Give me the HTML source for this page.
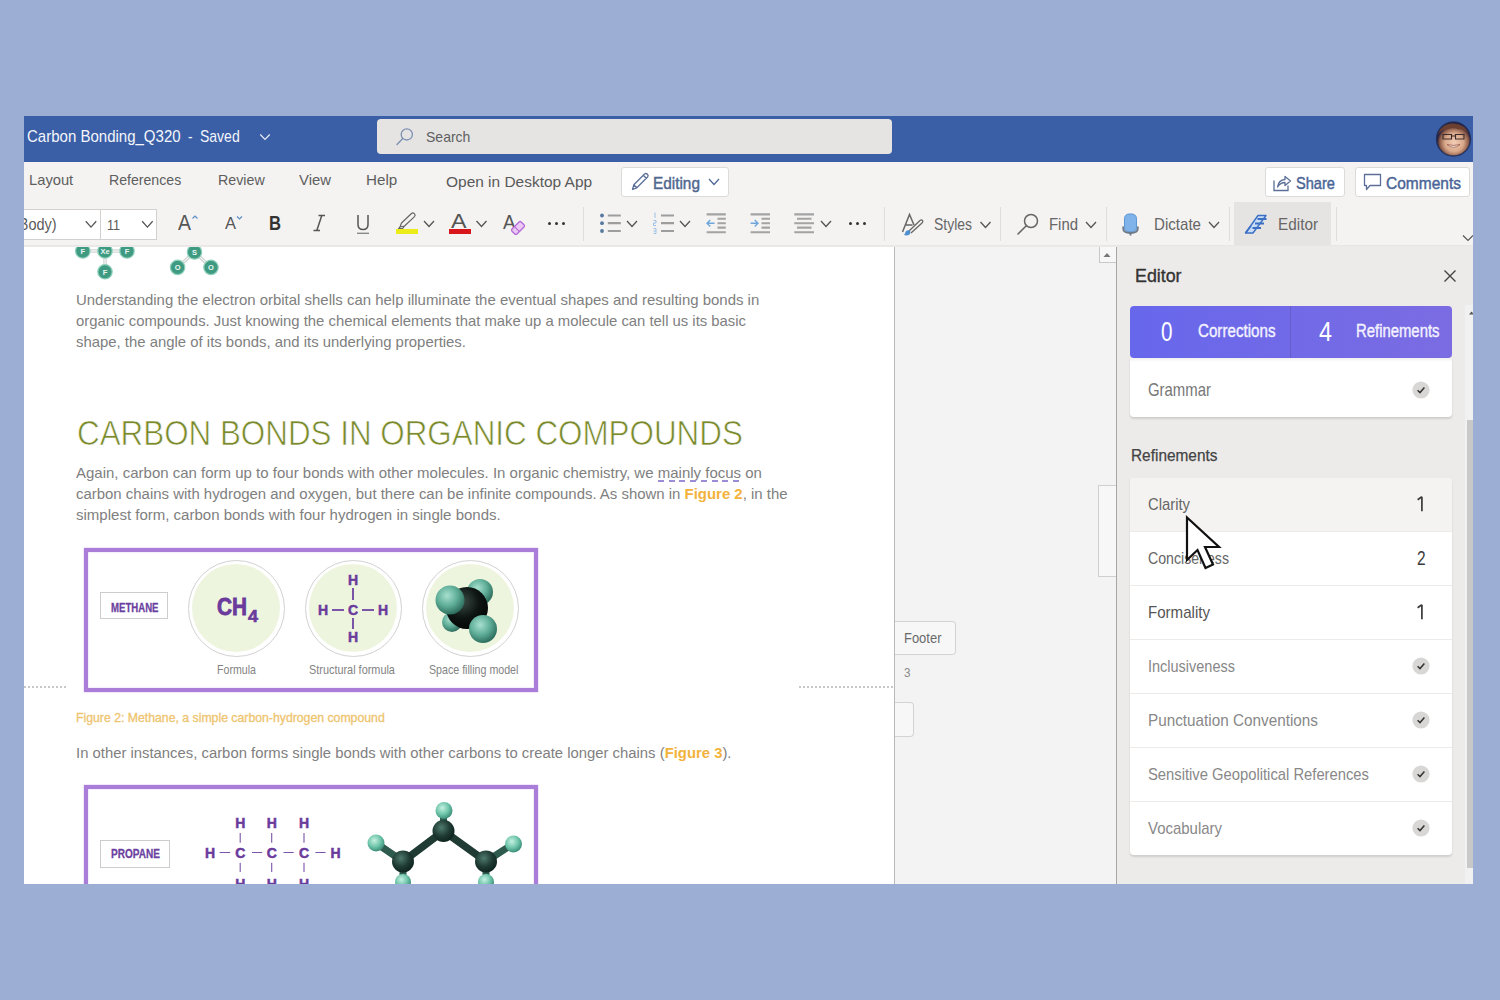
<!DOCTYPE html>
<html><head><meta charset="utf-8">
<style>
*{margin:0;padding:0;box-sizing:border-box}
html,body{width:1500px;height:1000px;overflow:hidden;background:#9caed3;font-family:"Liberation Sans",sans-serif;position:relative}
.a{position:absolute}
.t{position:absolute;white-space:pre;line-height:1;transform-origin:0 0}
svg{overflow:visible}
</style></head><body>
<div class="a" style="left:0;top:0;width:1500px;height:1000px;clip-path:inset(116px 27px 116px 24px)"><div class="a" style="left:0;top:0;width:1500px;height:1000px">
<div class="a" style="left:24px;top:116px;width:1449px;height:768px;background:#f4f3f2"></div>
<div class="a" style="left:24px;top:116px;width:1449px;height:46px;background:#3a5fa6"></div>
<div class="t" style="left:26.60px;top:127.98px;font-size:17.15px;color:#f4f6fb;font-weight:normal;transform:scaleX(0.8760);">Carbon Bonding_Q320</div>
<div class="t" style="left:187.50px;top:127.98px;font-size:17.15px;color:#f4f6fb;font-weight:normal;transform:scaleX(0.7879);">-</div>
<div class="t" style="left:199.50px;top:127.98px;font-size:17.15px;color:#f4f6fb;font-weight:normal;transform:scaleX(0.8165);">Saved</div>
<svg class="a" style="left:259px;top:132px;" width="12.5" height="9" viewBox="0 0 12.5 9"><path d="M1.25 2.50 l4.75 5.00 l4.75 -5.00" fill="none" stroke="#e8ecf5" stroke-width="1.2"/></svg>
<div class="a" style="left:377px;top:119px;width:515px;height:35px;background:#e5e4e3;border-radius:4px"></div>
<svg class="a" style="left:390px;top:125px;" width="24" height="24" viewBox="0 0 24 24"><circle cx="16.8" cy="9.4" r="5.6" fill="none" stroke="#7d91b3" stroke-width="1.3"/><path d="M12.8 13.4 L7 19.6" stroke="#7d91b3" stroke-width="1.4" stroke-linecap="round"/></svg>
<div class="t" style="left:426.40px;top:129.20px;font-size:15.12px;color:#606060;font-weight:normal;transform:scaleX(0.9272);">Search</div>
<svg class="a" style="left:1434px;top:120px" width="38" height="38" viewBox="0 0 38 38">
<defs><radialGradient id="face" cx="52%" cy="60%" r="50%"><stop offset="0" stop-color="#f2cdb5"/><stop offset="0.55" stop-color="#d9a88a"/><stop offset="0.85" stop-color="#8a5a48"/><stop offset="1" stop-color="#2a2240"/></radialGradient></defs>
<circle cx="19.5" cy="19" r="17" fill="url(#face)"/>
<path d="M4 15 Q6 4 19 3.5 Q32 4 35 15 Q31 8.5 25 9.5 Q19 7 13 9.5 Q7 9 4 15Z" fill="#6b4030"/>
<path d="M9 14.5 h8.5 v4.5 h-8.5z M21.5 14.5 h8.5 v4.5 h-8.5z M17.5 16 h4" fill="none" stroke="#3a2a2a" stroke-width="1.1"/>
<path d="M13 24.5 Q19.5 30 26 24.5 Q19.5 26.5 13 24.5Z" fill="#fff" stroke="#9a5a4a" stroke-width="0.8"/>
<circle cx="19.5" cy="19" r="17" fill="none" stroke="#1f2a55" stroke-width="1.4" opacity="0.8"/>
</svg>
<div class="t" style="left:28.70px;top:172.92px;font-size:14.97px;color:#5e5e5e;font-weight:normal;transform:scaleX(0.9835);">Layout</div>
<div class="t" style="left:109.00px;top:172.92px;font-size:14.97px;color:#5e5e5e;font-weight:normal;transform:scaleX(0.9430);">References</div>
<div class="t" style="left:217.60px;top:172.92px;font-size:14.97px;color:#5e5e5e;font-weight:normal;transform:scaleX(0.9525);">Review</div>
<div class="t" style="left:299.20px;top:172.92px;font-size:14.97px;color:#5e5e5e;font-weight:normal;transform:scaleX(0.9933);">View</div>
<div class="t" style="left:365.70px;top:172.92px;font-size:14.97px;color:#5e5e5e;font-weight:normal;transform:scaleX(1.0131);">Help</div>
<div class="t" style="left:446.30px;top:175.45px;font-size:14.83px;color:#595959;font-weight:normal;transform:scaleX(1.0427);">Open in Desktop App</div>
<div class="a" style="left:621px;top:167px;width:108px;height:30px;background:#fff;border:1px solid #dcdbda;border-radius:3px"></div>
<svg class="a" style="left:629px;top:171px;" width="22" height="22" viewBox="0 0 22 22"><path d="M3.5 18.5 L4.8 13.8 L15.6 3 Q17 1.8 18.4 3.2 Q19.8 4.6 18.6 6 L7.8 16.8 Z M14.3 4.3 L17.3 7.3 M4.8 13.8 L7.8 16.8" fill="none" stroke="#5b6f98" stroke-width="1.3" stroke-linejoin="round"/></svg>
<div class="t" style="left:653.00px;top:175.22px;font-size:16.28px;color:#50678f;font-weight:normal;transform:scaleX(0.9441);-webkit-text-stroke:0.45px #50678f">Editing</div>
<svg class="a" style="left:708px;top:177px;" width="13" height="9.5" viewBox="0 0 13 9.5"><path d="M1.00 2.00 l5.00 5.50 l5.00 -5.50" fill="none" stroke="#4a6596" stroke-width="1.2"/></svg>
<div class="a" style="left:1265px;top:167px;width:80px;height:30px;background:#fff;border:1px solid #dcdbda;border-radius:3px"></div>
<svg class="a" style="left:1270px;top:171px;" width="24" height="24" viewBox="0 0 24 24"><path d="M4 9.5 V19.5 H18 V14.5" fill="none" stroke="#5b6f98" stroke-width="1.3"/><path d="M7.5 16 Q8.5 9 15 8.5 V5.5 L20.5 10 L15 14.5 V11.5 Q10.5 11.5 7.5 16Z" fill="none" stroke="#5b6f98" stroke-width="1.3" stroke-linejoin="round"/></svg>
<div class="t" style="left:1296.00px;top:174.60px;font-size:17.01px;color:#4a6596;font-weight:normal;transform:scaleX(0.8596);-webkit-text-stroke:0.45px #4a6596">Share</div>
<div class="a" style="left:1355px;top:167px;width:115px;height:30px;background:#fff;border:1px solid #dcdbda;border-radius:3px"></div>
<svg class="a" style="left:1361px;top:171px;" width="24" height="24" viewBox="0 0 24 24"><path d="M3.5 3.5 H19.5 V14.5 H9 L5.5 18.5 V14.5 H3.5 Z" fill="none" stroke="#5b6f98" stroke-width="1.3" stroke-linejoin="round"/></svg>
<div class="t" style="left:1386.00px;top:174.60px;font-size:17.01px;color:#4a6596;font-weight:normal;transform:scaleX(0.9122);-webkit-text-stroke:0.45px #4a6596">Comments</div>
<div class="a" style="left:20px;top:208.5px;width:80.5px;height:31.0px;background:#fff;border:1px solid #d2d1d0;border-left:none"></div>
<div class="a" style="left:100px;top:208.5px;width:57px;height:31.0px;background:#fff;border:1px solid #d2d1d0"></div>
<div class="t" style="left:14.00px;top:216.79px;font-size:15.84px;color:#5a5a5a;font-weight:normal;transform:scaleX(0.9152);">(Body)</div>
<svg class="a" style="left:84px;top:219px;" width="13.5" height="9.8" viewBox="0 0 13.5 9.8"><path d="M1.75 2.30 l5.25 5.80 l5.25 -5.80" fill="none" stroke="#555" stroke-width="1.3"/></svg>
<div class="t" style="left:106.50px;top:217.03px;font-size:15.55px;color:#5a5a5a;font-weight:normal;transform:scaleX(0.8115);">11</div>
<svg class="a" style="left:141px;top:219px;" width="13.5" height="9.8" viewBox="0 0 13.5 9.8"><path d="M1.15 2.30 l5.25 5.80 l5.25 -5.80" fill="none" stroke="#555" stroke-width="1.3"/></svg>
<div class="t" style="left:178.00px;top:211.54px;font-size:21.80px;color:#555;font-weight:normal;transform:scaleX(0.8940);">A</div>
<svg class="a" style="left:190px;top:213px;" width="10" height="8" viewBox="0 0 10 8"><path d="M2.5 5.5 L5 3 L7.5 5.5" fill="none" stroke="#5b8fc8" stroke-width="1.2"/></svg>
<div class="t" style="left:225.00px;top:215.85px;font-size:16.72px;color:#555;font-weight:normal;transform:scaleX(0.9866);">A</div>
<svg class="a" style="left:235px;top:213px;" width="10" height="8" viewBox="0 0 10 8"><path d="M2 3.5 L4.5 6 L7 3.5" fill="none" stroke="#5b8fc8" stroke-width="1.2"/></svg>
<div class="t" style="left:269.00px;top:212.16px;font-size:21.08px;color:#333;font-weight:bold;transform:scaleX(0.7886);">B</div>
<svg class="a" style="left:310px;top:212px;" width="18" height="22" viewBox="0 0 18 22"><path d="M8.5 3.5 H15 M3.5 18.5 H10 M11.8 3.5 L6.8 18.5" fill="none" stroke="#555" stroke-width="1.5"/></svg>
<svg class="a" style="left:352px;top:212px;" width="22" height="24" viewBox="0 0 22 24"><path d="M6 3 V12.5 Q6 17.5 11 17.5 Q16 17.5 16 12.5 V3" fill="none" stroke="#555" stroke-width="1.5"/><path d="M5 21.3 H17" stroke="#888" stroke-width="1.4"/></svg>
<svg class="a" style="left:394px;top:211px;" width="26" height="26" viewBox="0 0 26 26"><path d="M6 16 L7.5 12 L17.5 2.5 Q19 1.3 20.5 2.8 Q21.8 4.3 20.5 5.6 L10.5 15 Z M6 16 L4.5 17.6 L8.5 17.6 L10.5 15" fill="none" stroke="#666" stroke-width="1.2" stroke-linejoin="round"/><rect x="2" y="18" width="22" height="5" fill="#ecec1a"/></svg>
<svg class="a" style="left:423px;top:219px;" width="13" height="9.5" viewBox="0 0 13 9.5"><path d="M1.00 2.00 l5.00 5.50 l5.00 -5.50" fill="none" stroke="#555" stroke-width="1.3"/></svg>
<div class="t" style="left:450.50px;top:211.89px;font-size:19.62px;color:#555;font-weight:normal;transform:scaleX(1.1843);">A</div>
<div class="a" style="left:449px;top:229px;width:22px;height:5px;background:#d8151b"></div>
<svg class="a" style="left:475px;top:219px;" width="13" height="9.5" viewBox="0 0 13 9.5"><path d="M1.50 2.00 l5.00 5.50 l5.00 -5.50" fill="none" stroke="#555" stroke-width="1.3"/></svg>
<div class="t" style="left:503.00px;top:211.77px;font-size:20.35px;color:#555;font-weight:normal;transform:scaleX(0.9210);">A</div>
<svg class="a" style="left:508px;top:216px;" width="20" height="20" viewBox="0 0 20 20"><g transform="rotate(-45 10 12)"><rect x="3.5" y="8.5" width="13" height="7" rx="1.5" fill="#ecc8f5" stroke="#b46ad6" stroke-width="1.3"/><path d="M8.5 8.5 V15.5" stroke="#b46ad6" stroke-width="1.1"/></g></svg>
<div class="a" style="left:548px;top:221.5px;width:3px;height:3.0px;background:#333;border-radius:50%"></div>
<div class="a" style="left:555px;top:221.5px;width:3px;height:3.0px;background:#333;border-radius:50%"></div>
<div class="a" style="left:562px;top:221.5px;width:3px;height:3.0px;background:#333;border-radius:50%"></div>
<div class="a" style="left:583px;top:207px;width:1px;height:34px;background:#dedddc"></div>
<svg class="a" style="left:596px;top:210px;" width="28" height="28" viewBox="0 0 28 28"><circle cx="6" cy="5.5" r="1.9" fill="#56789e"/><circle cx="6" cy="13.2" r="1.9" fill="#56789e"/><circle cx="6" cy="21" r="1.9" fill="#56789e"/><path d="M11.8 5.5 H24.8 M11.8 13.2 H24.8 M11.8 21 H24.8" stroke="#9d9d9d" stroke-width="2.2"/></svg>
<svg class="a" style="left:626px;top:219px;" width="13" height="9.5" viewBox="0 0 13 9.5"><path d="M1.00 2.00 l5.00 5.50 l5.00 -5.50" fill="none" stroke="#555" stroke-width="1.3"/></svg>
<svg class="a" style="left:650px;top:210px;" width="28" height="28" viewBox="0 0 28 28"><path d="M5 2.5 V8 M3.5 10.5 H6 V13 H3.5 V15.5 H6 M3.5 18.5 H6 V23.5 H3.5 M3.5 21 H6" fill="none" stroke="#9cc0e6" stroke-width="1"/><path d="M11 5.5 H24 M11 13.2 H24 M11 21 H24" stroke="#9d9d9d" stroke-width="2.2"/></svg>
<svg class="a" style="left:679px;top:219px;" width="13" height="9.5" viewBox="0 0 13 9.5"><path d="M1.00 2.00 l5.00 5.50 l5.00 -5.50" fill="none" stroke="#555" stroke-width="1.3"/></svg>
<svg class="a" style="left:700px;top:205px;" width="30" height="32" viewBox="0 0 30 32"><path d="M6.6 9.4 H25.8 M17.5 13.8 H25.8 M17.5 18.3 H25.8 M17.5 22.6 H25.8 M6.6 27.3 H25.8" stroke="#a3a3a3" stroke-width="2.1"/><path d="M14.5 18.3 H7 M10.3 15 L7 18.3 L10.3 21.6" fill="none" stroke="#6fa6da" stroke-width="1.4"/></svg>
<svg class="a" style="left:744px;top:205px;" width="30" height="32" viewBox="0 0 30 32"><path d="M6.6 9.4 H26 M17.5 13.8 H26 M17.5 18.3 H26 M17.5 22.6 H26 M6.6 27.3 H26" stroke="#a3a3a3" stroke-width="2.1"/><path d="M6.6 18.3 H14 M10.7 15 L14 18.3 L10.7 21.6" fill="none" stroke="#6fa6da" stroke-width="1.4"/></svg>
<svg class="a" style="left:788px;top:205px;" width="30" height="32" viewBox="0 0 30 32"><path d="M6.3 9.4 H26 M9 13.8 H23.5 M6.3 18.3 H26 M9 22.6 H23.5 M6.3 27.3 H26" stroke="#a3a3a3" stroke-width="2.1"/></svg>
<svg class="a" style="left:820px;top:219px;" width="13" height="9.5" viewBox="0 0 13 9.5"><path d="M1.00 2.00 l5.00 5.50 l5.00 -5.50" fill="none" stroke="#555" stroke-width="1.3"/></svg>
<div class="a" style="left:849px;top:221.5px;width:3px;height:3.0px;background:#333;border-radius:50%"></div>
<div class="a" style="left:856px;top:221.5px;width:3px;height:3.0px;background:#333;border-radius:50%"></div>
<div class="a" style="left:863px;top:221.5px;width:3px;height:3.0px;background:#333;border-radius:50%"></div>
<div class="a" style="left:884px;top:207px;width:1px;height:34px;background:#dedddc"></div>
<svg class="a" style="left:899px;top:211px;" width="28" height="28" viewBox="0 0 28 28"><path d="M3.5 21 L10.5 3.5 L15 14 M6.5 14 H13.5" fill="none" stroke="#666" stroke-width="1.5"/><path d="M10 20 L21 9.5 Q22.5 8.3 23.5 9.5 Q24.5 10.8 23 12 L12 22" fill="none" stroke="#666" stroke-width="1.3"/><path d="M6 22.5 Q7 18.5 10.5 19.5 Q12.5 21 10.5 23.5 Q8 25 5 24 Z" fill="#4f8fd0"/></svg>
<div class="t" style="left:934.00px;top:216.10px;font-size:17.01px;color:#666;font-weight:normal;transform:scaleX(0.8206);">Styles</div>
<svg class="a" style="left:979px;top:220px;" width="13" height="9.5" viewBox="0 0 13 9.5"><path d="M1.50 2.00 l5.00 5.50 l5.00 -5.50" fill="none" stroke="#555" stroke-width="1.3"/></svg>
<div class="a" style="left:1000px;top:207px;width:1px;height:34px;background:#dedddc"></div>
<svg class="a" style="left:1014px;top:211px;" width="28" height="28" viewBox="0 0 28 28"><circle cx="17" cy="10" r="6.5" fill="none" stroke="#666" stroke-width="1.5"/><path d="M12.3 14.7 L4 23" stroke="#666" stroke-width="1.6" stroke-linecap="round"/></svg>
<div class="t" style="left:1049.00px;top:216.10px;font-size:17.01px;color:#666;font-weight:normal;transform:scaleX(0.8768);">Find</div>
<svg class="a" style="left:1085px;top:220px;" width="13" height="9.5" viewBox="0 0 13 9.5"><path d="M1.00 2.00 l5.00 5.50 l5.00 -5.50" fill="none" stroke="#555" stroke-width="1.3"/></svg>
<div class="a" style="left:1106px;top:207px;width:1px;height:34px;background:#dedddc"></div>
<svg class="a" style="left:1120px;top:211px;" width="22" height="26" viewBox="0 0 22 26"><rect x="4.5" y="3" width="12" height="18" rx="4.5" fill="#80b3ea" stroke="#5b95d6" stroke-width="1"/><path d="M3.2 15.5 V17.5 Q3.2 22 10.5 22 Q17.8 22 17.8 17.5 V15.5" fill="none" stroke="#6d7888" stroke-width="1.8"/><path d="M10.5 22 V24.5" stroke="#6d7888" stroke-width="1.8"/></svg>
<div class="t" style="left:1154.00px;top:216.10px;font-size:17.01px;color:#666;font-weight:normal;transform:scaleX(0.8881);">Dictate</div>
<svg class="a" style="left:1208px;top:220px;" width="13" height="9.5" viewBox="0 0 13 9.5"><path d="M1.00 2.00 l5.00 5.50 l5.00 -5.50" fill="none" stroke="#555" stroke-width="1.3"/></svg>
<div class="a" style="left:1229px;top:207px;width:1px;height:34px;background:#dedddc"></div>
<div class="a" style="left:1234px;top:202px;width:97px;height:43px;background:#e5e4e3"></div>
<svg class="a" style="left:1242px;top:211px;" width="28" height="26" viewBox="0 0 28 26"><path d="M3.5 22 L16 4.5 L24 4.5 L11 22 Z" fill="#c9dcf5" stroke="#3a6fc4" stroke-width="1.4" stroke-linejoin="round"/><path d="M15.5 8 H24.5 M13 12.5 H22 M10.5 17 H19" stroke="#3a6fc4" stroke-width="2.2"/><path d="M3.5 22 L9 15" stroke="#3a6fc4" stroke-width="1.6"/></svg>
<div class="t" style="left:1278.00px;top:216.10px;font-size:17.01px;color:#666;font-weight:normal;transform:scaleX(0.9005);">Editor</div>
<div class="a" style="left:1336px;top:207px;width:1px;height:34px;background:#dedddc"></div>
<svg class="a" style="left:1462px;top:233px;" width="13" height="9" viewBox="0 0 13 9"><path d="M1.00 2.50 l5.00 5.00 l5.00 -5.00" fill="none" stroke="#555" stroke-width="1.2"/></svg>
<div class="a" style="left:24px;top:245px;width:1449px;height:3px;background:linear-gradient(#e6e5e4,#f0efee)"></div>
<div class="a" style="left:24px;top:247px;width:870px;height:637px;background:#fff"></div>
<div class="a" style="left:894px;top:247px;width:222px;height:637px;background:#f3f3f3"></div>
<div class="a" style="left:24px;top:247px;width:870px;height:60px;overflow:hidden">
<svg class="a" style="left:-24px;top:-247px" width="300" height="300" viewBox="0 0 300 300"><path d="M82.8 251 H127 M105 251 V272 M177.6 267.4 L194.5 252 L211 267.4" stroke="#cfd6d3" stroke-width="3.4" fill="none"/><path d="M82.8 251 H127 M105 251 V272 M177.6 267.4 L194.5 252 L211 267.4" stroke="#fff" stroke-width="1" fill="none"/><g fill="#3f9a82" stroke="#8fd0bb" stroke-width="1.2"><circle cx="82.8" cy="251" r="7.2"/><circle cx="105" cy="251" r="7.2"/><circle cx="127" cy="251" r="7.2"/><circle cx="105" cy="271.8" r="7.2"/><circle cx="194.5" cy="252" r="7.2"/><circle cx="177.6" cy="267.4" r="7.2"/><circle cx="211" cy="267.4" r="7.2"/></g><text x="82.8" y="253.8" font-size="7.5" font-weight="bold" fill="#e9f7f1" text-anchor="middle" font-family="Liberation Sans">F</text><text x="105" y="253.8" font-size="7.5" font-weight="bold" fill="#e9f7f1" text-anchor="middle" font-family="Liberation Sans">Xe</text><text x="127" y="253.8" font-size="7.5" font-weight="bold" fill="#e9f7f1" text-anchor="middle" font-family="Liberation Sans">F</text><text x="105" y="274.6" font-size="7.5" font-weight="bold" fill="#e9f7f1" text-anchor="middle" font-family="Liberation Sans">F</text><text x="194.5" y="254.8" font-size="7.5" font-weight="bold" fill="#e9f7f1" text-anchor="middle" font-family="Liberation Sans">S</text><text x="177.6" y="270.2" font-size="7.5" font-weight="bold" fill="#e9f7f1" text-anchor="middle" font-family="Liberation Sans">O</text><text x="211" y="270.2" font-size="7.5" font-weight="bold" fill="#e9f7f1" text-anchor="middle" font-family="Liberation Sans">O</text></svg>
</div>
<div class="t" style="left:76.00px;top:291.95px;font-size:15.41px;color:#808080;font-weight:normal;transform:scaleX(0.9705);">Understanding the electron orbital shells can help illuminate the eventual shapes and resulting bonds in</div>
<div class="t" style="left:76.00px;top:312.95px;font-size:15.41px;color:#808080;font-weight:normal;transform:scaleX(0.9635);">organic compounds. Just knowing the chemical elements that make up a molecule can tell us its basic</div>
<div class="t" style="left:76.00px;top:333.95px;font-size:15.41px;color:#808080;font-weight:normal;transform:scaleX(0.9667);">shape, the angle of its bonds, and its underlying properties.</div>
<div class="t" style="left:77.30px;top:415.76px;font-size:34.88px;color:#7a8a2c;font-weight:normal;transform:scaleX(0.8995);-webkit-text-stroke:0.7px #fff;paint-order:normal">CARBON BONDS IN ORGANIC COMPOUNDS</div>
<div class="t" style="left:76.00px;top:465.25px;font-size:15.41px;color:#808080;font-weight:normal;transform:scaleX(0.9737);">Again, carbon can form up to four bonds with other molecules. In organic chemistry, we mainly focus on</div>
<div class="a" style="left:658px;top:480.3px;width:86px;height:2.0px;background:repeating-linear-gradient(90deg,#9d8dd6 0 6px,transparent 6px 10.7px)"></div>
<div class="t" style="left:76.00px;top:486.38px;font-size:15.26px;color:#808080;font-weight:normal;transform:scaleX(0.9793);">carbon chains with hydrogen and oxygen, but there can be infinite compounds. As shown in <b style="color:#f2b33c">Figure 2</b>, in the</div>
<div class="t" style="left:76.00px;top:507.08px;font-size:15.26px;color:#808080;font-weight:normal;transform:scaleX(0.9843);">simplest form, carbon bonds with four hydrogen in single bonds.</div>
<div class="a" style="left:84px;top:548px;width:454px;height:144px;border:4.6px solid #a97dd8;box-shadow:0 0 1.5px #c9a8ee, inset 0 0 1.5px #c9a8ee;background:#fff"></div>
<div class="a" style="left:100px;top:592px;width:68px;height:27px;border:1.2px solid #cdcdcd"></div>
<div class="t" style="left:110.50px;top:600.92px;font-size:13.08px;color:#6b3fa0;font-weight:bold;transform:scaleX(0.7344);-webkit-text-stroke:0.3px #6b3fa0">METHANE</div>
<div class="a" style="left:187.5px;top:559.5px;width:97px;height:97px;border-radius:50%;border:1.6px solid #d2d2d2;background:#fff"></div>
<div class="a" style="left:192px;top:564px;width:88px;height:88px;border-radius:50%;background:#eef5df"></div>
<div class="a" style="left:304.5px;top:559.5px;width:97px;height:97px;border-radius:50%;border:1.6px solid #d2d2d2;background:#fff"></div>
<div class="a" style="left:309px;top:564px;width:88px;height:88px;border-radius:50%;background:#eef5df"></div>
<div class="a" style="left:421.5px;top:559.5px;width:97px;height:97px;border-radius:50%;border:1.6px solid #d2d2d2;background:#fff"></div>
<div class="a" style="left:426px;top:564px;width:88px;height:88px;border-radius:50%;background:#eef5df"></div>
<div class="t" style="left:217.00px;top:594.58px;font-size:24.71px;color:#6a3a9c;font-weight:bold;transform:scaleX(0.8408);-webkit-text-stroke:0.9px #6a3a9c">CH</div>
<div class="t" style="left:247.50px;top:608.85px;font-size:16.72px;color:#6a3a9c;font-weight:bold;transform:scaleX(1.0760);-webkit-text-stroke:0.6px #6a3a9c">4</div>
<div class="t" style="left:347px;top:573px;width:12px;text-align:center;font-size:14px;font-weight:bold;color:#6a3a9c;line-height:14px;-webkit-text-stroke:0.5px #6a3a9c">H</div>
<div class="t" style="left:317px;top:602.5px;width:12px;text-align:center;font-size:14px;font-weight:bold;color:#6a3a9c;line-height:14px;-webkit-text-stroke:0.5px #6a3a9c">H</div>
<div class="t" style="left:347px;top:602.5px;width:12px;text-align:center;font-size:14px;font-weight:bold;color:#6a3a9c;line-height:14px;-webkit-text-stroke:0.5px #6a3a9c">C</div>
<div class="t" style="left:377px;top:602.5px;width:12px;text-align:center;font-size:14px;font-weight:bold;color:#6a3a9c;line-height:14px;-webkit-text-stroke:0.5px #6a3a9c">H</div>
<div class="t" style="left:347px;top:629.5px;width:12px;text-align:center;font-size:14px;font-weight:bold;color:#6a3a9c;line-height:14px;-webkit-text-stroke:0.5px #6a3a9c">H</div>
<div class="a" style="left:352.3px;top:588px;width:1.3999999999999773px;height:12px;background:#7a55a8"></div>
<div class="a" style="left:352.3px;top:618px;width:1.3999999999999773px;height:11px;background:#7a55a8"></div>
<div class="a" style="left:332px;top:609.3px;width:12px;height:1.400000000000091px;background:#7a55a8"></div>
<div class="a" style="left:362px;top:609.3px;width:12px;height:1.400000000000091px;background:#7a55a8"></div>
<svg class="a" style="left:420px;top:558px" width="100" height="100" viewBox="0 0 100 100">
<defs>
<radialGradient id="dk" cx="40%" cy="35%" r="65%"><stop offset="0" stop-color="#3a4a44"/><stop offset="0.6" stop-color="#0d1411"/><stop offset="1" stop-color="#050807"/></radialGradient>
<radialGradient id="tl" cx="40%" cy="35%" r="65%"><stop offset="0" stop-color="#a8e0cf"/><stop offset="0.55" stop-color="#5fae98"/><stop offset="1" stop-color="#2f6f5f"/></radialGradient>
</defs>
<circle cx="32" cy="64" r="10" fill="url(#tl)"/>
<circle cx="60" cy="34" r="13" fill="url(#tl)"/>
<circle cx="47" cy="50" r="21" fill="url(#dk)"/>
<circle cx="63" cy="71" r="14" fill="url(#tl)"/>
<circle cx="30" cy="42" r="14.5" fill="url(#tl)"/>
</svg>
<div class="t" style="left:216.50px;top:663.54px;font-size:12.35px;color:#838383;font-weight:normal;transform:scaleX(0.8606);">Formula</div>
<div class="t" style="left:309.00px;top:663.54px;font-size:12.35px;color:#838383;font-weight:normal;transform:scaleX(0.8819);">Structural formula</div>
<div class="t" style="left:428.50px;top:663.54px;font-size:12.35px;color:#838383;font-weight:normal;transform:scaleX(0.8630);">Space filling model</div>
<div class="a" style="left:24px;top:686px;width:42px;height:1.5px;background:repeating-linear-gradient(90deg,#c8c8c8 0 2px,transparent 2px 4px)"></div>
<div class="a" style="left:799px;top:686px;width:95px;height:1.5px;background:repeating-linear-gradient(90deg,#c8c8c8 0 2px,transparent 2px 4px)"></div>
<div class="t" style="left:75.50px;top:711.54px;font-size:12.35px;color:#eec46e;font-weight:normal;transform:scaleX(0.9932);-webkit-text-stroke:0.3px #eec46e">Figure 2: Methane, a simple carbon-hydrogen compound</div>
<div class="t" style="left:76.00px;top:745.08px;font-size:15.26px;color:#808080;font-weight:normal;transform:scaleX(0.9739);">In other instances, carbon forms single bonds with other carbons to create longer chains (<b style="color:#f2b33c">Figure 3</b>).</div>
<div class="a" style="left:24px;top:760px;width:870px;height:124px;overflow:hidden">
<div class="a" style="left:60px;top:25px;width:454px;height:160px;border:4.6px solid #a97dd8;box-shadow:0 0 1.5px #c9a8ee, inset 0 0 1.5px #c9a8ee;background:#fff"></div>
<div class="a" style="left:76px;top:80px;width:70px;height:28px;border:1.2px solid #cdcdcd"></div>
</div>
<div class="t" style="left:110.50px;top:847.42px;font-size:13.08px;color:#6b3fa0;font-weight:bold;transform:scaleX(0.7690);-webkit-text-stroke:0.3px #6b3fa0">PROPANE</div>
<div class="a" style="left:24px;top:760px;width:870px;height:124px;overflow:hidden"><svg class="a" style="left:-24px;top:-760px" width="600" height="900" viewBox="0 0 600 900">
<g font-family="Liberation Sans" font-weight="bold" font-size="14" fill="#6a3a9c" stroke="#6a3a9c" stroke-width="0.5" text-anchor="middle">
<text x="240.2" y="827.6">H</text><text x="240.2" y="858.4">C</text><text x="240.2" y="889">H</text>
<text x="271.7" y="827.6">H</text><text x="271.7" y="858.4">C</text><text x="271.7" y="889">H</text>
<text x="304" y="827.6">H</text><text x="304" y="858.4">C</text><text x="304" y="889">H</text>
<text x="210" y="858.4">H</text><text x="335.6" y="858.4">H</text></g>
<g stroke="#7a55a8" stroke-width="1.1">
<path d="M240.2 833 V842.7 M240.2 862.8 V872"/>
<path d="M271.7 833 V842.7 M271.7 862.8 V872"/>
<path d="M304 833 V842.7 M304 862.8 V872"/>
<path d="M219.6 852.5 H230.2 M252 852.5 H262.2 M283.5 852.5 H293.7 M315.4 852.5 H325.6"/></g>
<defs>
<radialGradient id="bs" cx="40%" cy="35%" r="65%"><stop offset="0" stop-color="#4f7a6e"/><stop offset="0.6" stop-color="#1f3b33"/><stop offset="1" stop-color="#0f2520"/></radialGradient>
<radialGradient id="bh" cx="40%" cy="35%" r="65%"><stop offset="0" stop-color="#c5f1e2"/><stop offset="0.6" stop-color="#6cc3a8"/><stop offset="1" stop-color="#3c8e78"/></radialGradient>
</defs>
<path d="M403 861.5 L443.5 831 L486 861.5" stroke="#1f3b33" stroke-width="7.5" stroke-linecap="round" fill="none"/>
<path d="M443.5 831 V812 M403 861.5 L376 843 M486 861.5 L513 844 M403 861.5 V882 M486 861.5 V882" stroke="#2f5a4e" stroke-width="7" stroke-linecap="round" fill="none"/>
<circle cx="444" cy="810.5" r="8.5" fill="url(#bh)"/>
<circle cx="376" cy="843" r="8.5" fill="url(#bh)"/>
<circle cx="513.5" cy="844" r="8.5" fill="url(#bh)"/>
<circle cx="443.5" cy="831" r="11" fill="url(#bs)"/>
<circle cx="403" cy="861.5" r="11" fill="url(#bs)"/>
<circle cx="486" cy="861.5" r="11" fill="url(#bs)"/>
<circle cx="403" cy="882" r="8" fill="url(#bh)"/>
<circle cx="486" cy="882" r="8" fill="url(#bh)"/>

</svg></div>
<div class="a" style="left:894px;top:621px;width:62px;height:34px;background:#f7f7f7;border:1.8px solid #d3d3d3;border-left:none;border-radius:0 4px 4px 0"></div>
<div class="t" style="left:904.00px;top:630.99px;font-size:14.53px;color:#6a6a6a;font-weight:normal;transform:scaleX(0.8927);">Footer</div>
<div class="t" style="left:903.50px;top:666.54px;font-size:12.35px;color:#8a8a8a;font-weight:normal;transform:scaleX(0.9463);">3</div>
<div class="a" style="left:894px;top:702px;width:20px;height:35px;background:#f7f7f7;border:1.8px solid #d3d3d3;border-left:none;border-radius:0 4px 4px 0"></div>
<div class="a" style="left:893.6px;top:247px;width:1.2999999999999545px;height:637px;background:#b9b9b9"></div>
<div class="a" style="left:1098.5px;top:247px;width:18.0px;height:16px;background:#f7f7f7;border:1.3px solid #c8c8c8;border-top:none"></div>
<svg class="a" style="left:1101px;top:250px;" width="12" height="10" viewBox="0 0 12 10"><path d="M2.5 7 L6 3 L9.5 7 Z" fill="#777"/></svg>
<div class="a" style="left:1098px;top:485px;width:18px;height:92px;background:#f7f7f7;border:1.3px solid #cfcfcf;border-right:none"></div>
<div class="a" style="left:1115.5px;top:247px;width:1.5px;height:637px;background:#a6a6a6"></div>
<div class="a" style="left:1117px;top:247px;width:356px;height:637px;background:#edebea"></div>
<div class="t" style="left:1135.00px;top:267.37px;font-size:18.46px;color:#333;font-weight:normal;transform:scaleX(0.9665);-webkit-text-stroke:0.35px #333">Editor</div>
<svg class="a" style="left:1440px;top:266px;" width="20" height="20" viewBox="0 0 20 20"><path d="M4.5 4.5 L15.5 15.5 M15.5 4.5 L4.5 15.5" stroke="#444" stroke-width="1.4"/></svg>
<div class="a" style="left:1130px;top:306px;width:322px;height:52px;background:linear-gradient(90deg,#6767ec,#7b6ce2);border-radius:4px"></div>
<div class="a" style="left:1290px;top:306px;width:1.2999999999999545px;height:52px;background:#6a5ccc"></div>
<div class="t" style="left:1161.00px;top:317.00px;font-size:28.34px;color:#fff;font-weight:normal;transform:scaleX(0.7298);">0</div>
<div class="t" style="left:1197.50px;top:322.00px;font-size:18.90px;color:#f3f2ff;font-weight:normal;transform:scaleX(0.8022);-webkit-text-stroke:0.4px #f3f2ff">Corrections</div>
<div class="t" style="left:1319.00px;top:317.00px;font-size:28.34px;color:#fff;font-weight:normal;transform:scaleX(0.8249);">4</div>
<div class="t" style="left:1355.50px;top:322.00px;font-size:18.90px;color:#f3f2ff;font-weight:normal;transform:scaleX(0.7872);-webkit-text-stroke:0.4px #f3f2ff">Refinements</div>
<div class="a" style="left:1130px;top:358px;width:322px;height:59px;background:#fff;border-radius:0 0 4px 4px;box-shadow:0 1.5px 2px rgba(0,0,0,0.12)"></div>
<div class="a" style="left:1130px;top:358px;width:322px;height:4px;background:linear-gradient(#f1f0ef,#fff)"></div>
<div class="t" style="left:1148.00px;top:381.25px;font-size:18.60px;color:#777;font-weight:normal;transform:scaleX(0.8020);">Grammar</div>
<svg class="a" style="left:1411px;top:380px;" width="20" height="20" viewBox="0 0 20 20"><circle cx="10" cy="10" r="8.6" fill="#d8d7d6"/><path d="M6.6 10.3 L9 12.6 L13.4 7.6" fill="none" stroke="#333" stroke-width="1.5"/></svg>
<div class="t" style="left:1130.50px;top:446.60px;font-size:17.01px;color:#444;font-weight:normal;transform:scaleX(0.9060);-webkit-text-stroke:0.25px #444">Refinements</div>
<div class="a" style="left:1130px;top:478px;width:322px;height:377px;background:#fff;border-radius:4px;box-shadow:0 1.5px 2px rgba(0,0,0,0.12)"></div>
<div class="a" style="left:1130px;top:478px;width:322px;height:53px;background:#f4f3f2;border-radius:4px 4px 0 0"></div>
<div class="a" style="left:1130px;top:531px;width:322px;height:1px;background:#ecebea"></div>
<div class="a" style="left:1130px;top:585px;width:322px;height:1px;background:#ecebea"></div>
<div class="a" style="left:1130px;top:639px;width:322px;height:1px;background:#ecebea"></div>
<div class="a" style="left:1130px;top:693px;width:322px;height:1px;background:#ecebea"></div>
<div class="a" style="left:1130px;top:747px;width:322px;height:1px;background:#ecebea"></div>
<div class="a" style="left:1130px;top:801px;width:322px;height:1px;background:#ecebea"></div>
<div class="t" style="left:1148.00px;top:497.46px;font-size:15.99px;color:#666;font-weight:normal;transform:scaleX(0.9269);">Clarity</div>
<svg class="a" style="left:1412px;top:495px;" width="16" height="18" viewBox="0 0 16 18"><path d="M9.9 1.8 V16.2 M5.6 4.8 L9.9 1.8" fill="none" stroke="#3a3a3a" stroke-width="1.7"/></svg>
<div class="t" style="left:1148.00px;top:551.46px;font-size:15.99px;color:#666;font-weight:normal;transform:scaleX(0.8849);">Conciseness</div>
<div class="t" style="left:1417.00px;top:548.02px;font-size:20.06px;color:#3a3a3a;font-weight:normal;transform:scaleX(0.7711);">2</div>
<div class="t" style="left:1148.00px;top:605.46px;font-size:15.99px;color:#555;font-weight:normal;transform:scaleX(0.9433);">Formality</div>
<svg class="a" style="left:1412px;top:603px;" width="16" height="18" viewBox="0 0 16 18"><path d="M9.9 1.8 V16.2 M5.6 4.8 L9.9 1.8" fill="none" stroke="#3a3a3a" stroke-width="1.7"/></svg>
<div class="t" style="left:1148.00px;top:659.46px;font-size:15.99px;color:#888;font-weight:normal;transform:scaleX(0.9065);">Inclusiveness</div>
<svg class="a" style="left:1411px;top:656px;" width="20" height="20" viewBox="0 0 20 20"><circle cx="10" cy="10" r="8.6" fill="#d8d7d6"/><path d="M6.6 10.3 L9 12.6 L13.4 7.6" fill="none" stroke="#333" stroke-width="1.5"/></svg>
<div class="t" style="left:1148.00px;top:713.46px;font-size:15.99px;color:#888;font-weight:normal;transform:scaleX(0.9563);">Punctuation Conventions</div>
<svg class="a" style="left:1411px;top:710px;" width="20" height="20" viewBox="0 0 20 20"><circle cx="10" cy="10" r="8.6" fill="#d8d7d6"/><path d="M6.6 10.3 L9 12.6 L13.4 7.6" fill="none" stroke="#333" stroke-width="1.5"/></svg>
<div class="t" style="left:1148.00px;top:767.46px;font-size:15.99px;color:#888;font-weight:normal;transform:scaleX(0.9245);">Sensitive Geopolitical References</div>
<svg class="a" style="left:1411px;top:764px;" width="20" height="20" viewBox="0 0 20 20"><circle cx="10" cy="10" r="8.6" fill="#d8d7d6"/><path d="M6.6 10.3 L9 12.6 L13.4 7.6" fill="none" stroke="#333" stroke-width="1.5"/></svg>
<div class="t" style="left:1148.00px;top:821.46px;font-size:15.99px;color:#888;font-weight:normal;transform:scaleX(0.9354);">Vocabulary</div>
<svg class="a" style="left:1411px;top:818px;" width="20" height="20" viewBox="0 0 20 20"><circle cx="10" cy="10" r="8.6" fill="#d8d7d6"/><path d="M6.6 10.3 L9 12.6 L13.4 7.6" fill="none" stroke="#333" stroke-width="1.5"/></svg>
<div class="a" style="left:1465px;top:305px;width:8px;height:579px;background:#f1f1f1"></div>
<svg class="a" style="left:1465px;top:308px;" width="8" height="8" viewBox="0 0 8 8"><path d="M4 6.5 L6.5 3.5 L9 6.5Z" fill="#555"/></svg>
<div class="a" style="left:1466.5px;top:420px;width:6.5px;height:448px;background:#c8c8c8"></div>
<svg class="a" style="left:1184px;top:515px" width="40" height="58" viewBox="0 0 40 58">
<path d="M3 2.5 V45 L13.5 35 L21.5 53 L29 49.5 L21 32 H35 Z" fill="#fff" stroke="#111" stroke-width="2.2" stroke-linejoin="miter"/>
</svg>
</div></div></body></html>
